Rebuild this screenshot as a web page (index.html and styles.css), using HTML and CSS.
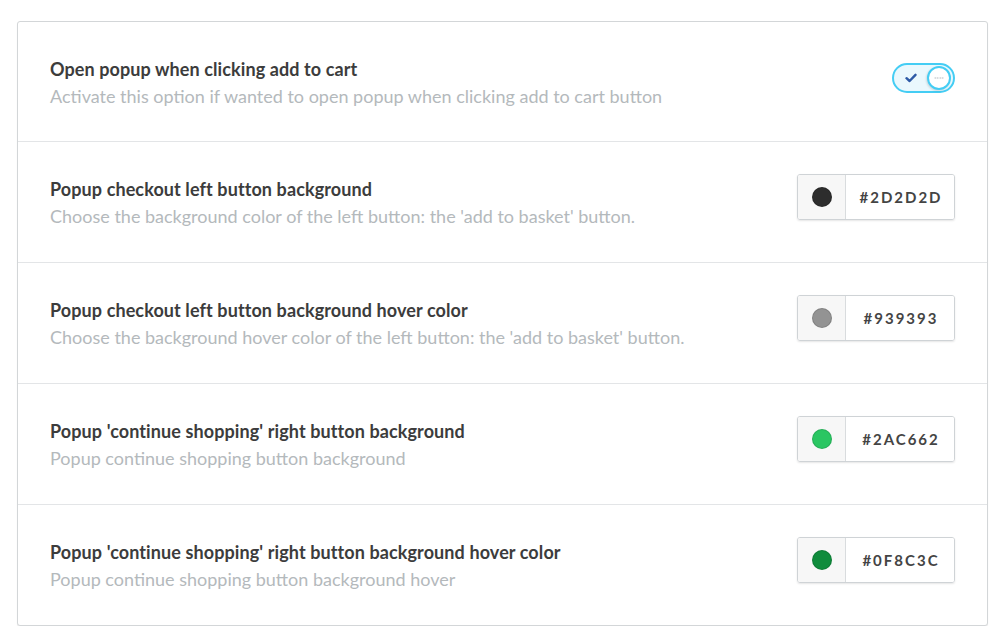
FILE: index.html
```html
<!DOCTYPE html>
<html>
<head>
<meta charset="utf-8">
<link rel="stylesheet" href="styles.css">
</head>
<body>
<div class="card">
  <div class="row">
    <div class="text">
      <div class="title">Open popup when clicking add to cart</div>
      <div class="desc">Activate this option if wanted to open popup when clicking add to cart button</div>
    </div>
    <div class="toggle">
      <svg class="check" width="12" height="10" viewBox="0 0 12 10"><path d="M1.5 5.2 L4.6 8 L10.5 1.8" fill="none" stroke="#2d5aa6" stroke-width="2.4" stroke-linecap="round" stroke-linejoin="round"/></svg>
      <span class="knob"><span class="dots"></span></span>
    </div>
  </div>
  <div class="row">
    <div class="text">
      <div class="title">Popup checkout left button background</div>
      <div class="desc">Choose the background color of the left button: the 'add to basket' button.</div>
    </div>
    <div class="picker">
      <span class="swatch"><span class="dot c1"></span></span>
      <span class="hex">#2D2D2D</span>
    </div>
  </div>
  <div class="row">
    <div class="text">
      <div class="title">Popup checkout left button background hover color</div>
      <div class="desc">Choose the background hover color of the left button: the 'add to basket' button.</div>
    </div>
    <div class="picker">
      <span class="swatch"><span class="dot c2"></span></span>
      <span class="hex">#939393</span>
    </div>
  </div>
  <div class="row">
    <div class="text">
      <div class="title">Popup 'continue shopping' right button background</div>
      <div class="desc">Popup continue shopping button background</div>
    </div>
    <div class="picker">
      <span class="swatch"><span class="dot c3"></span></span>
      <span class="hex">#2AC662</span>
    </div>
  </div>
  <div class="row">
    <div class="text">
      <div class="title">Popup 'continue shopping' right button background hover color</div>
      <div class="desc">Popup continue shopping button background hover</div>
    </div>
    <div class="picker">
      <span class="swatch"><span class="dot c4"></span></span>
      <span class="hex">#0F8C3C</span>
    </div>
  </div>
</div>
</body>
</html>
```
FILE: styles.css
```css
html, body {
  margin: 0;
  padding: 0;
  background: #ffffff;
  font-family: Lato, "Open Sans", sans-serif;
}
body {
  padding: 21px 12px 0 17px;
}
.card {
  width: 969px;
  border: 1px solid #d3d6d8;
  border-radius: 3px;
  box-shadow: 0 1px 1px rgba(0,0,0,0.08);
  background: #fff;
}
.row {
  height: 120px;
  display: flex;
  align-items: center;
  justify-content: space-between;
  padding: 0 32px 0 32px;
  border-top: 1px solid #e3e5e7;
}
.row:first-child {
  border-top: none;
  height: 119px;
}
.text {
  display: flex;
  flex-direction: column;
  margin-top: 2px;
}
.title {
  font-size: 18px;
  font-weight: 700;
  color: #3c3c3c;
  line-height: 27px;
  letter-spacing: 0.1px;
}
.desc {
  font-size: 18px;
  color: #b4b9bc;
  line-height: 27px;
}
.toggle {
  width: 63px;
  height: 30px;
  box-sizing: border-box;
  border: 2px solid #44cdf4;
  border-radius: 15px;
  background: #eaf8fd;
  display: flex;
  align-items: center;
  justify-content: space-between;
  padding: 0 2px 0 11px;
  margin-top: -8px;
}
.check {
  display: block;
}
.knob {
  width: 24px;
  height: 24px;
  box-sizing: border-box;
  border: 2px solid #44cdf4;
  border-radius: 50%;
  background: #fff;
  display: flex;
  align-items: center;
  justify-content: center;
  box-shadow: -1px 1px 2px rgba(0,0,0,0.12);
}
.dots {
  width: 10px;
  height: 2px;
  background-image: radial-gradient(circle, #cfd3d6 0.9px, transparent 1px);
  background-size: 2.5px 2px;
}
.picker {
  display: flex;
  height: 44px;
  border: 1px solid #cfd3d6;
  border-radius: 3px;
  overflow: hidden;
  box-shadow: 0 1px 2px rgba(0,0,0,0.1);
  margin-top: -10px;
}
.swatch {
  width: 47px;
  background: #f7f7f7;
  border-right: 1px solid #d9dcde;
  display: flex;
  align-items: center;
  justify-content: center;
}
.dot {
  width: 20px;
  height: 20px;
  border-radius: 50%;
  box-sizing: border-box;
  border: 1px solid rgba(0,0,0,0.12);
}
.c1 { background: #2d2d2d; }
.c2 { background: #939393; }
.c3 { background: #2ac662; }
.c4 { background: #0f8c3c; }
.hex {
  width: 108px;
  display: flex;
  align-items: center;
  justify-content: center;
  font-size: 15px;
  font-weight: 700;
  letter-spacing: 2px;
  padding-left: 2px;
  box-sizing: border-box;
  color: #444;
  background: #fff;
}
```
